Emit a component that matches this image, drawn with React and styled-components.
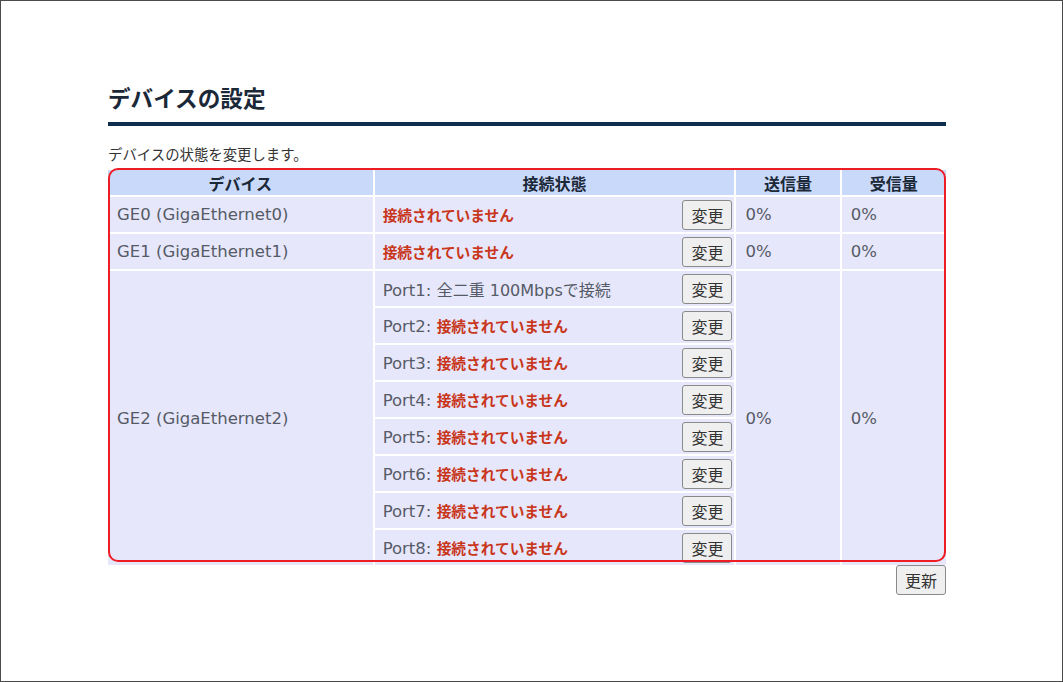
import React from "react";
import styled, { createGlobalStyle } from "styled-components";

const GlobalStyle = createGlobalStyle`
  html, body {
    margin: 0;
    padding: 0;
    background: #fff;
  }
  body {
    font-family: "DejaVu Sans", "Noto Sans CJK JP", sans-serif;
    color: #555;
  }
`;

const devices = [
  { name: "GE0 (GigaEthernet0)", ports: [{ label: null, ok: false }] },
  { name: "GE1 (GigaEthernet1)", ports: [{ label: null, ok: false }] },
  {
    name: "GE2 (GigaEthernet2)",
    ports: [
      { label: "Port1", ok: true, text: "全二重 100Mbpsで接続" },
      { label: "Port2", ok: false },
      { label: "Port3", ok: false },
      { label: "Port4", ok: false },
      { label: "Port5", ok: false },
      { label: "Port6", ok: false },
      { label: "Port7", ok: false },
      { label: "Port8", ok: false },
    ],
  },
];

const App = () => {
  return (
    <Frame>
      <GlobalStyle />
      <Content>
        <Title>デバイスの設定</Title>
        <Lead>デバイスの状態を変更します。</Lead>
        <TableWrap>
          <Table>
            <colgroup>
              <col style={{ width: 264 }} />
              <col style={{ width: 359 }} />
              <col style={{ width: 103 }} />
              <col style={{ width: 104 }} />
            </colgroup>
            <thead>
              <tr>
                <Th>デバイス</Th>
                <Th>接続状態</Th>
                <Th>送信量</Th>
                <Th>受信量</Th>
              </tr>
            </thead>
            <tbody>
              {devices.map((d) =>
                d.ports.map((p, i) => (
                  <tr key={d.name + i}>
                    {i === 0 && <Td rowSpan={d.ports.length}>{d.name}</Td>}
                    <StatusTd>
                      <StatusRow>
                        <span>
                          {p.label && <>{p.label}: </>}
                          {p.ok ? <Jp>{p.text}</Jp> : <Down>接続されていません</Down>}
                        </span>
                        <Button>変更</Button>
                      </StatusRow>
                    </StatusTd>
                    {i === 0 && (
                      <>
                        <Td rowSpan={d.ports.length}>0%</Td>
                        <Td rowSpan={d.ports.length}>0%</Td>
                      </>
                    )}
                  </tr>
                ))
              )}
            </tbody>
          </Table>
          <Highlight />
        </TableWrap>
        <Footer>
          <Button>更新</Button>
        </Footer>
      </Content>
    </Frame>
  );
};

export default App;

const Frame = styled.div`
  box-sizing: border-box;
  width: 1063px;
  height: 682px;
  border: 1px solid #4a4a4a;
  overflow: hidden;
`;

const Content = styled.div`
  width: 838px;
  margin-left: 107px;
  padding-top: 82px;
`;

const Title = styled.h1`
  margin: 0;
  font-family: "Noto Sans CJK JP", sans-serif;
  font-size: 22.6px;
  line-height: 30px;
  font-weight: bold;
  color: #1b2838;
  padding-bottom: 9px;
  border-bottom: 4px solid #0f2d4c;
`;

const Lead = styled.p`
  margin: 18px 0 4px;
  font-family: "Noto Sans CJK JP", sans-serif;
  font-size: 14.4px;
  line-height: 20px;
  color: #333;
`;

const TableWrap = styled.div`
  position: relative;
`;

const Table = styled.table`
  border-collapse: separate;
  border-spacing: 2px;
  margin: 0 -2px;
  width: 842px;
  table-layout: fixed;
`;

const Th = styled.th`
  height: 25px;
  padding: 0;
  background: #c9d9fa;
  color: #1b2838;
  font-family: "Noto Sans CJK JP", sans-serif;
  font-size: 16px;
  font-weight: bold;
  text-align: center;
`;

const Td = styled.td`
  height: 35px;
  padding: 0 8px 0 9px;
  background: #e7e7fb;
  font-size: 16.5px;
  color: #555b66;
  vertical-align: middle;
`;

const StatusTd = styled(Td)`
  padding: 0 2px 0 8px;
`;

const StatusRow = styled.div`
  display: flex;
  align-items: center;
  justify-content: space-between;
`;

const Jp = styled.span`
  font-size: 16px;
`;

const Down = styled.span`
  font-family: "Noto Sans CJK JP", sans-serif;
  font-size: 14.7px;
  color: #c8361c;
  font-weight: bold;
`;

const Button = styled.button`
  box-sizing: border-box;
  width: 50px;
  height: 30px;
  padding: 0;
  background: #efefef;
  border: 1px solid #8a8a8a;
  border-radius: 3px;
  font-family: "Noto Sans CJK JP", sans-serif;
  font-size: 16px;
  color: #333;
`;

const Highlight = styled.div`
  position: absolute;
  left: 0;
  top: 0;
  width: 838px;
  height: 394px;
  box-sizing: border-box;
  border: 2px solid #ee1c24;
  border-radius: 10px;
  pointer-events: none;
`;

const Footer = styled.div`
  display: flex;
  justify-content: flex-end;
  margin-top: -2px;
`;
